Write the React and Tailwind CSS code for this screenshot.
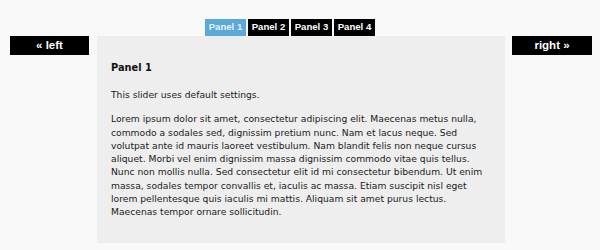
const tabs = ["Panel 1", "Panel 2", "Panel 3", "Panel 4"];

const lines = [
  "Lorem ipsum dolor sit amet, consectetur adipiscing elit. Maecenas metus nulla,",
  "commodo a sodales sed, dignissim pretium nunc. Nam et lacus neque. Sed",
  "volutpat ante id mauris laoreet vestibulum. Nam blandit felis non neque cursus",
  "aliquet. Morbi vel enim dignissim massa dignissim commodo vitae quis tellus.",
  "Nunc non mollis nulla. Sed consectetur elit id mi consectetur bibendum. Ut enim",
  "massa, sodales tempor convallis et, iaculis ac massa. Etiam suscipit nisl eget",
  "lorem pellentesque quis iaculis mi mattis. Aliquam sit amet purus lectus.",
  "Maecenas tempor ornare sollicitudin.",
];

export default function App() {
  return (
    <div className="w-[600px] h-[250px] bg-[#f9f9f9] pt-[19px] font-['Liberation_Sans',Arial,sans-serif]">
      {/* tab strip */}
      <div className="ml-[205px] flex gap-[2px]">
        {tabs.map((t, i) => (
          <div
            key={t}
            className={`w-[41px] h-[17px] flex items-center justify-center text-[9.6px] font-bold ${
              i === 0 ? "bg-[#5ba9d6] text-[#e6f1f9]" : "bg-black text-white"
            }`}
          >
            {t}
          </div>
        ))}
      </div>

      <div className="flex items-start">
        <div className="ml-[10px] w-[79px] h-[19px] bg-black text-white text-[11.5px] font-bold flex items-center justify-center">
          « left
        </div>

        <div className="ml-[8px] w-[408px] h-[207px] bg-[#eeeeee] pl-[14px] pt-[25px] text-[#1a1a1a] font-['DejaVu_Sans',Verdana,sans-serif]">
          <h2 className="text-[9.8px] leading-[14px] font-bold text-[#111]">Panel 1</h2>
          <p className="mt-[13px] text-[9.2px] leading-[13.3px]">This slider uses default settings.</p>
          <p className="mt-[11px] text-[9.2px] leading-[13.3px] whitespace-nowrap">
            {lines.map((l) => (
              <span key={l} className="block">{l}</span>
            ))}
          </p>
        </div>

        <div className="ml-[7px] w-[80px] h-[19px] bg-black text-white text-[11.5px] font-bold flex items-center justify-center">
          right »
        </div>
      </div>
    </div>
  );
}
